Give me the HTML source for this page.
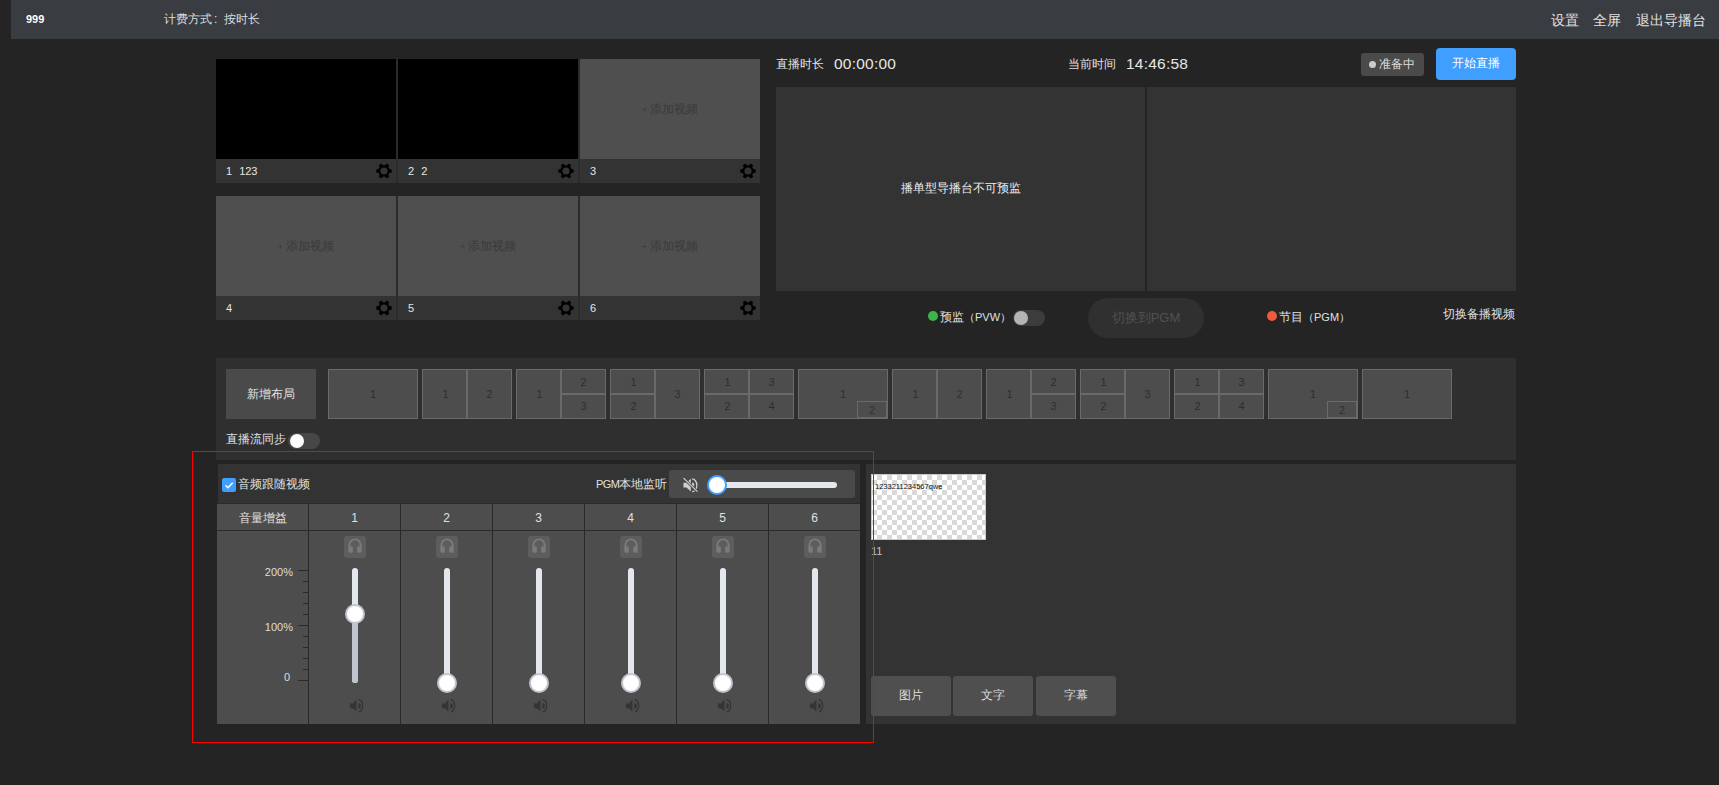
<!DOCTYPE html>
<html><head><meta charset="utf-8">
<style>
*{margin:0;padding:0;box-sizing:border-box}
html,body{width:1719px;height:785px;overflow:hidden;background:#242424;font-family:"Liberation Sans",sans-serif;color:#ddd}
.a{position:absolute}
.t{position:absolute;white-space:nowrap;line-height:1}
#top{left:11px;top:0;width:1708px;height:39px;background:#393c40}
.tile{position:absolute;width:180px;height:124px}
.tile .pv{position:absolute;left:0;top:0;width:180px;height:100px;background:#000}
.tile .pv.e{background:#4f4f4f}
.tile .ft{position:absolute;left:0;top:100px;width:180px;height:24px;background:#333}
.tile .lb{position:absolute;left:10px;top:7px;font-size:11px;line-height:11px;color:#e6e6e6}
.tile .add{position:absolute;left:0;top:43px;width:180px;text-align:center;font-size:12px;line-height:14px;color:#3a3a3a}
.gear{position:absolute;left:160px;top:4px;width:16px;height:16px}
.gap{position:absolute;width:2px;background:#2b2b2b}
.pane{position:absolute;top:87px;width:369px;height:204px;background:#333}
.lay{position:absolute;top:369px;width:90px;height:50px}
.c{position:absolute;border:1px solid #6a6a6a;background:#4d4d4d;color:#2e2e2e;font-size:11px;display:flex;align-items:center;justify-content:center}
.col{position:absolute;top:504px;width:91px;height:220px}
.hd{position:absolute;left:0;top:0;width:91px;height:26px;background:#4d4d4d;font-size:12px;line-height:28px;text-align:center;color:#e0e0e0}
.bd{position:absolute;left:0;top:27px;width:91px;height:193px;background:#4d4d4d}
.hp{position:absolute;left:35px;top:32px;width:22px;height:22px;border-radius:3px;background:#5d5d5d}
.trk{position:absolute;left:43px;top:64px;width:6px;height:115px;border-radius:3px;background:#e4e7ed}
.knob{position:absolute;left:36px;top:169px;width:20px;height:20px;border-radius:50%;background:#fff;border:2px solid #c0c4cc}
.spk{position:absolute;left:39.5px;top:195px;width:16px;height:14px}
.btn3{position:absolute;top:676px;width:80px;height:40px;border-radius:3px;background:#4f4f4f;font-size:12px;line-height:38px;text-align:center;color:#ddd}
</style></head><body>

<!-- top bar -->
<div class="a" id="top"></div>
<div class="t" style="left:26px;top:14px;font-size:11px;color:#fff;font-weight:bold">999</div>
<div class="t" style="left:164px;top:13px;font-size:12px;color:#ddd">计费方式<span style="display:inline-block;width:12px;padding-left:2px">:</span>按时长</div>
<div class="t" style="left:1551px;top:13px;font-size:14px;color:#e0e0e0">设置</div>
<div class="t" style="left:1593px;top:13px;font-size:14px;color:#e0e0e0">全屏</div>
<div class="t" style="left:1636px;top:13px;font-size:14px;color:#e0e0e0">退出导播台</div>


<div class="tile" style="left:216px;top:59px">
<div class="pv"></div>
<div class="ft"><div class="lb">1<span style="margin-left:7px">123</span></div><svg class="gear" viewBox="0 0 16 16"><g fill="#000"><circle cx="8" cy="8" r="5.8"/>
<rect y="6.3" x="0.3" height="3.4" width="15.4" rx="0.4"/>
<rect y="6.3" x="0.3" height="3.4" width="15.4" rx="0.4" transform="rotate(60 8 8)"/>
<rect y="6.3" x="0.3" height="3.4" width="15.4" rx="0.4" transform="rotate(120 8 8)"/></g>
<circle cx="8" cy="8" r="3.6" fill="#333"/></svg></div>
</div>
<div class="tile" style="left:398px;top:59px">
<div class="pv"></div>
<div class="ft"><div class="lb">2<span style="margin-left:7px">2</span></div><svg class="gear" viewBox="0 0 16 16"><g fill="#000"><circle cx="8" cy="8" r="5.8"/>
<rect y="6.3" x="0.3" height="3.4" width="15.4" rx="0.4"/>
<rect y="6.3" x="0.3" height="3.4" width="15.4" rx="0.4" transform="rotate(60 8 8)"/>
<rect y="6.3" x="0.3" height="3.4" width="15.4" rx="0.4" transform="rotate(120 8 8)"/></g>
<circle cx="8" cy="8" r="3.6" fill="#333"/></svg></div>
</div>
<div class="tile" style="left:580px;top:59px">
<div class="pv e"><div class="add"><span style="font-size:9px">+</span> 添加视频</div></div>
<div class="ft"><div class="lb">3</div><svg class="gear" viewBox="0 0 16 16"><g fill="#000"><circle cx="8" cy="8" r="5.8"/>
<rect y="6.3" x="0.3" height="3.4" width="15.4" rx="0.4"/>
<rect y="6.3" x="0.3" height="3.4" width="15.4" rx="0.4" transform="rotate(60 8 8)"/>
<rect y="6.3" x="0.3" height="3.4" width="15.4" rx="0.4" transform="rotate(120 8 8)"/></g>
<circle cx="8" cy="8" r="3.6" fill="#333"/></svg></div>
</div>
<div class="tile" style="left:216px;top:196px">
<div class="pv e"><div class="add"><span style="font-size:9px">+</span> 添加视频</div></div>
<div class="ft"><div class="lb">4</div><svg class="gear" viewBox="0 0 16 16"><g fill="#000"><circle cx="8" cy="8" r="5.8"/>
<rect y="6.3" x="0.3" height="3.4" width="15.4" rx="0.4"/>
<rect y="6.3" x="0.3" height="3.4" width="15.4" rx="0.4" transform="rotate(60 8 8)"/>
<rect y="6.3" x="0.3" height="3.4" width="15.4" rx="0.4" transform="rotate(120 8 8)"/></g>
<circle cx="8" cy="8" r="3.6" fill="#333"/></svg></div>
</div>
<div class="tile" style="left:398px;top:196px">
<div class="pv e"><div class="add"><span style="font-size:9px">+</span> 添加视频</div></div>
<div class="ft"><div class="lb">5</div><svg class="gear" viewBox="0 0 16 16"><g fill="#000"><circle cx="8" cy="8" r="5.8"/>
<rect y="6.3" x="0.3" height="3.4" width="15.4" rx="0.4"/>
<rect y="6.3" x="0.3" height="3.4" width="15.4" rx="0.4" transform="rotate(60 8 8)"/>
<rect y="6.3" x="0.3" height="3.4" width="15.4" rx="0.4" transform="rotate(120 8 8)"/></g>
<circle cx="8" cy="8" r="3.6" fill="#333"/></svg></div>
</div>
<div class="tile" style="left:580px;top:196px">
<div class="pv e"><div class="add"><span style="font-size:9px">+</span> 添加视频</div></div>
<div class="ft"><div class="lb">6</div><svg class="gear" viewBox="0 0 16 16"><g fill="#000"><circle cx="8" cy="8" r="5.8"/>
<rect y="6.3" x="0.3" height="3.4" width="15.4" rx="0.4"/>
<rect y="6.3" x="0.3" height="3.4" width="15.4" rx="0.4" transform="rotate(60 8 8)"/>
<rect y="6.3" x="0.3" height="3.4" width="15.4" rx="0.4" transform="rotate(120 8 8)"/></g>
<circle cx="8" cy="8" r="3.6" fill="#333"/></svg></div>
</div>
<div class="gap" style="left:396px;top:59px;height:124px"></div>
<div class="gap" style="left:578px;top:59px;height:124px"></div>
<div class="gap" style="left:396px;top:196px;height:124px"></div>
<div class="gap" style="left:578px;top:196px;height:124px"></div>
<div class="t" style="left:776px;top:58px;font-size:12px;color:#e0e0e0">直播时长</div>
<div class="t" style="left:834px;top:56px;font-size:15.5px;letter-spacing:0.22px;color:#e6e6e6">00:00:00</div>
<div class="t" style="left:1068px;top:58px;font-size:12px;color:#e0e0e0">当前时间</div>
<div class="t" style="left:1126px;top:56px;font-size:15.5px;letter-spacing:0.22px;color:#e6e6e6">14:46:58</div>
<div class="a" style="left:1361px;top:53px;width:63px;height:23px;background:#4a4a4a;border-radius:3px"></div>
<div class="a" style="left:1369px;top:61px;width:7px;height:7px;background:#ccc;border-radius:50%"></div>
<div class="t" style="left:1379px;top:58px;font-size:12px;color:#ddd">准备中</div>
<div class="a" style="left:1436px;top:48px;width:80px;height:32px;background:#409eff;border-radius:4px;font-size:12px;line-height:30px;text-align:center;color:#fff">开始直播</div>
<div class="pane" style="left:776px"><div class="t" style="left:0;width:369px;top:95px;text-align:center;font-size:12px;color:#eee">播单型导播台不可预监</div></div>
<div class="pane" style="left:1147px"></div>
<div class="a" style="left:928px;top:311px;width:10px;height:10px;border-radius:50%;background:#3cb64b"></div>
<div class="t" style="left:940px;top:311px;font-size:12px;color:#e0e0e0">预监<span style="font-size:11px">（PVW）</span></div>
<div class="a" style="left:1013px;top:310px;width:32px;height:16px;border-radius:8px;background:#3c3c3c"></div>
<div class="a" style="left:1014px;top:311px;width:14px;height:14px;border-radius:50%;background:#b4b4b4"></div>
<div class="a" style="left:1088px;top:298px;width:116px;height:40px;border-radius:20px;background:#303030;font-size:13px;line-height:40px;text-align:center;color:#505050">切换到PGM</div>
<div class="a" style="left:1267px;top:311px;width:10px;height:10px;border-radius:50%;background:#f05a3c"></div>
<div class="t" style="left:1279px;top:311px;font-size:12px;color:#e0e0e0">节目<span style="font-size:11px">（PGM）</span></div>
<div class="t" style="left:1443px;top:308px;font-size:12px;color:#e0e0e0">切换备播视频</div>
<div class="a" style="left:216px;top:358px;width:1300px;height:102px;background:#2f2f2f"></div>
<div class="a" style="left:226px;top:369px;width:90px;height:50px;background:#4a4a4a;font-size:12px;line-height:50px;text-align:center;color:#e0e0e0">新增布局</div>
<div class="lay" style="left:328px"><div class="c" style="left:0px;top:0px;width:90px;height:50px;">1</div></div>
<div class="lay" style="left:422px"><div class="c" style="left:0px;top:0px;width:45px;height:50px;padding-left:2px;">1</div><div class="c" style="left:45px;top:0px;width:45px;height:50px;">2</div></div>
<div class="lay" style="left:516px"><div class="c" style="left:0px;top:0px;width:45px;height:50px;padding-left:2px;">1</div><div class="c" style="left:45px;top:0px;width:45px;height:25px;">2</div><div class="c" style="left:45px;top:25px;width:45px;height:25px;padding-bottom:2px;">3</div></div>
<div class="lay" style="left:610px"><div class="c" style="left:0px;top:0px;width:45px;height:25px;padding-left:2px;">1</div><div class="c" style="left:0px;top:25px;width:45px;height:25px;padding-left:2px;padding-bottom:2px;">2</div><div class="c" style="left:45px;top:0px;width:45px;height:50px;">3</div></div>
<div class="lay" style="left:704px"><div class="c" style="left:0px;top:0px;width:45px;height:25px;padding-left:2px;">1</div><div class="c" style="left:0px;top:25px;width:45px;height:25px;padding-left:2px;padding-bottom:2px;">2</div><div class="c" style="left:45px;top:0px;width:45px;height:25px;">3</div><div class="c" style="left:45px;top:25px;width:45px;height:25px;padding-bottom:2px;">4</div></div>
<div class="lay" style="left:798px"><div class="c" style="left:0px;top:0px;width:90px;height:50px;">1</div><div class="c" style="left:59px;top:32px;width:30px;height:17px;">2</div></div>
<div class="lay" style="left:892px"><div class="c" style="left:0px;top:0px;width:45px;height:50px;padding-left:2px;">1</div><div class="c" style="left:45px;top:0px;width:45px;height:50px;">2</div></div>
<div class="lay" style="left:986px"><div class="c" style="left:0px;top:0px;width:45px;height:50px;padding-left:2px;">1</div><div class="c" style="left:45px;top:0px;width:45px;height:25px;">2</div><div class="c" style="left:45px;top:25px;width:45px;height:25px;padding-bottom:2px;">3</div></div>
<div class="lay" style="left:1080px"><div class="c" style="left:0px;top:0px;width:45px;height:25px;padding-left:2px;">1</div><div class="c" style="left:0px;top:25px;width:45px;height:25px;padding-left:2px;padding-bottom:2px;">2</div><div class="c" style="left:45px;top:0px;width:45px;height:50px;">3</div></div>
<div class="lay" style="left:1174px"><div class="c" style="left:0px;top:0px;width:45px;height:25px;padding-left:2px;">1</div><div class="c" style="left:0px;top:25px;width:45px;height:25px;padding-left:2px;padding-bottom:2px;">2</div><div class="c" style="left:45px;top:0px;width:45px;height:25px;">3</div><div class="c" style="left:45px;top:25px;width:45px;height:25px;padding-bottom:2px;">4</div></div>
<div class="lay" style="left:1268px"><div class="c" style="left:0px;top:0px;width:90px;height:50px;">1</div><div class="c" style="left:59px;top:32px;width:30px;height:17px;">2</div></div>
<div class="lay" style="left:1362px"><div class="c" style="left:0px;top:0px;width:90px;height:50px;">1</div></div>
<div class="t" style="left:226px;top:433px;font-size:12px;color:#e0e0e0">直播流同步</div>
<div class="a" style="left:288px;top:433px;width:32px;height:16px;border-radius:8px;background:#474747"></div>
<div class="a" style="left:290px;top:434px;width:14px;height:14px;border-radius:50%;background:#fff"></div>
<div class="a" style="left:218px;top:464px;width:642px;height:260px;background:#333"></div>
<div class="a" style="left:222px;top:478px;width:14px;height:14px;border-radius:2px;background:#409eff"><svg width="14" height="14" style="position:absolute;left:0;top:0"><path d="M3.5 7.2 L6 9.7 L10.7 4.8" fill="none" stroke="#fff" stroke-width="1.5"/></svg></div>
<div class="t" style="left:238px;top:478px;font-size:12px;color:#e0e0e0">音频跟随视频</div>
<div class="t" style="left:596px;top:478px;font-size:12px;color:#e0e0e0"><span style="font-size:11px;letter-spacing:-0.6px">PGM</span>本地监听</div>
<div class="a" style="left:669px;top:470px;width:186px;height:28px;border-radius:3px;background:#4a4a4a"><svg width="16" height="16" viewBox="0 0 17 17" style="position:absolute;left:13.7px;top:6.6px"><path d="M0.5 6 H3.7 L8.3 1.8 V15.4 L3.7 11.2 H0.5 Z" fill="#cfcfcf"/>
<path d="M9.7 2 A5 6.8 0 0 1 9.7 15.6" fill="none" stroke="#cfcfcf" stroke-width="1.4"/><path d="M9.6 5.8 A2.4 2.8 0 0 1 9.6 11.4 Z" fill="#cfcfcf"/>
<path d="M0.6 1.2 L15.4 15.6" stroke="#4a4a4a" stroke-width="2.8"/><path d="M0.6 1.2 L15.4 15.6" stroke="#cfcfcf" stroke-width="1.3"/></svg><div class="a" style="left:48px;top:12px;width:120px;height:6px;border-radius:3px;background:#e4e7ed"></div><div class="a" style="left:38px;top:5px;width:20px;height:20px;border-radius:50%;background:#fff;border:2px solid #409eff"></div></div>
<div class="a" style="left:217px;top:503px;width:643px;height:221px;background:#2a2a2a"></div>
<div class="col" style="left:217px"><div class="hd">音量增益</div><div class="bd"></div></div>
<div class="t" style="left:253px;width:40px;text-align:right;top:567px;font-size:11px;color:#ddd">200%</div>
<div class="t" style="left:253px;width:40px;text-align:right;top:622px;font-size:11px;color:#ddd">100%</div>
<div class="t" style="left:250px;width:40px;text-align:right;top:672px;font-size:11px;color:#ddd">0</div>
<div class="a" style="left:298px;top:570px;width:10px;height:1px;background:#2a2a2a"></div>
<div class="a" style="left:303px;top:581px;width:5px;height:1px;background:#2a2a2a"></div>
<div class="a" style="left:303px;top:592px;width:5px;height:1px;background:#2a2a2a"></div>
<div class="a" style="left:303px;top:603px;width:5px;height:1px;background:#2a2a2a"></div>
<div class="a" style="left:303px;top:614px;width:5px;height:1px;background:#2a2a2a"></div>
<div class="a" style="left:298px;top:625px;width:10px;height:1px;background:#2a2a2a"></div>
<div class="a" style="left:303px;top:636px;width:5px;height:1px;background:#2a2a2a"></div>
<div class="a" style="left:303px;top:647px;width:5px;height:1px;background:#2a2a2a"></div>
<div class="a" style="left:303px;top:658px;width:5px;height:1px;background:#2a2a2a"></div>
<div class="a" style="left:303px;top:669px;width:5px;height:1px;background:#2a2a2a"></div>
<div class="a" style="left:298px;top:680px;width:10px;height:1px;background:#2a2a2a"></div>
<div class="col" style="left:309px"><div class="hd">1</div><div class="bd"></div><div class="hp"><svg width="14" height="15" viewBox="0 0 14 15" style="position:absolute;left:4px;top:1.6px"><path d="M1.4 9.5 V7 A5.6 5.6 0 0 1 12.6 7 V9.5" fill="none" stroke="#7a7a7a" stroke-width="1.9"/>
<rect x="0.3" y="8.3" width="4.5" height="6.4" rx="1.4" fill="#7a7a7a"/><rect x="9.2" y="8.3" width="4.5" height="6.4" rx="1.4" fill="#7a7a7a"/></svg></div><div class="trk"><div class="a" style="left:0;top:46px;width:6px;height:69px;border-radius:0 0 3px 3px;background:#c0c4cc"></div></div><div class="knob" style="top:100px"></div><svg width="16" height="14" viewBox="0 0 16 14" class="spk"><path d="M0.9 4.6 H4 L7.4 0.6 V12.6 L4 9.2 H0.9 Z" fill="#343434"/>
<path d="M9.3 4.3 A2.6 2.7 0 0 1 9.3 9.7 Z" fill="#343434"/><path d="M9.6 0.7 A4.1 6.1 0 0 1 9.6 12.9" fill="none" stroke="#343434" stroke-width="1.3"/></svg></div>
<div class="col" style="left:401px"><div class="hd">2</div><div class="bd"></div><div class="hp"><svg width="14" height="15" viewBox="0 0 14 15" style="position:absolute;left:4px;top:1.6px"><path d="M1.4 9.5 V7 A5.6 5.6 0 0 1 12.6 7 V9.5" fill="none" stroke="#7a7a7a" stroke-width="1.9"/>
<rect x="0.3" y="8.3" width="4.5" height="6.4" rx="1.4" fill="#7a7a7a"/><rect x="9.2" y="8.3" width="4.5" height="6.4" rx="1.4" fill="#7a7a7a"/></svg></div><div class="trk"></div><div class="knob" style="top:169px"></div><svg width="16" height="14" viewBox="0 0 16 14" class="spk"><path d="M0.9 4.6 H4 L7.4 0.6 V12.6 L4 9.2 H0.9 Z" fill="#343434"/>
<path d="M9.3 4.3 A2.6 2.7 0 0 1 9.3 9.7 Z" fill="#343434"/><path d="M9.6 0.7 A4.1 6.1 0 0 1 9.6 12.9" fill="none" stroke="#343434" stroke-width="1.3"/></svg></div>
<div class="col" style="left:493px"><div class="hd">3</div><div class="bd"></div><div class="hp"><svg width="14" height="15" viewBox="0 0 14 15" style="position:absolute;left:4px;top:1.6px"><path d="M1.4 9.5 V7 A5.6 5.6 0 0 1 12.6 7 V9.5" fill="none" stroke="#7a7a7a" stroke-width="1.9"/>
<rect x="0.3" y="8.3" width="4.5" height="6.4" rx="1.4" fill="#7a7a7a"/><rect x="9.2" y="8.3" width="4.5" height="6.4" rx="1.4" fill="#7a7a7a"/></svg></div><div class="trk"></div><div class="knob" style="top:169px"></div><svg width="16" height="14" viewBox="0 0 16 14" class="spk"><path d="M0.9 4.6 H4 L7.4 0.6 V12.6 L4 9.2 H0.9 Z" fill="#343434"/>
<path d="M9.3 4.3 A2.6 2.7 0 0 1 9.3 9.7 Z" fill="#343434"/><path d="M9.6 0.7 A4.1 6.1 0 0 1 9.6 12.9" fill="none" stroke="#343434" stroke-width="1.3"/></svg></div>
<div class="col" style="left:585px"><div class="hd">4</div><div class="bd"></div><div class="hp"><svg width="14" height="15" viewBox="0 0 14 15" style="position:absolute;left:4px;top:1.6px"><path d="M1.4 9.5 V7 A5.6 5.6 0 0 1 12.6 7 V9.5" fill="none" stroke="#7a7a7a" stroke-width="1.9"/>
<rect x="0.3" y="8.3" width="4.5" height="6.4" rx="1.4" fill="#7a7a7a"/><rect x="9.2" y="8.3" width="4.5" height="6.4" rx="1.4" fill="#7a7a7a"/></svg></div><div class="trk"></div><div class="knob" style="top:169px"></div><svg width="16" height="14" viewBox="0 0 16 14" class="spk"><path d="M0.9 4.6 H4 L7.4 0.6 V12.6 L4 9.2 H0.9 Z" fill="#343434"/>
<path d="M9.3 4.3 A2.6 2.7 0 0 1 9.3 9.7 Z" fill="#343434"/><path d="M9.6 0.7 A4.1 6.1 0 0 1 9.6 12.9" fill="none" stroke="#343434" stroke-width="1.3"/></svg></div>
<div class="col" style="left:677px"><div class="hd">5</div><div class="bd"></div><div class="hp"><svg width="14" height="15" viewBox="0 0 14 15" style="position:absolute;left:4px;top:1.6px"><path d="M1.4 9.5 V7 A5.6 5.6 0 0 1 12.6 7 V9.5" fill="none" stroke="#7a7a7a" stroke-width="1.9"/>
<rect x="0.3" y="8.3" width="4.5" height="6.4" rx="1.4" fill="#7a7a7a"/><rect x="9.2" y="8.3" width="4.5" height="6.4" rx="1.4" fill="#7a7a7a"/></svg></div><div class="trk"></div><div class="knob" style="top:169px"></div><svg width="16" height="14" viewBox="0 0 16 14" class="spk"><path d="M0.9 4.6 H4 L7.4 0.6 V12.6 L4 9.2 H0.9 Z" fill="#343434"/>
<path d="M9.3 4.3 A2.6 2.7 0 0 1 9.3 9.7 Z" fill="#343434"/><path d="M9.6 0.7 A4.1 6.1 0 0 1 9.6 12.9" fill="none" stroke="#343434" stroke-width="1.3"/></svg></div>
<div class="col" style="left:769px"><div class="hd">6</div><div class="bd"></div><div class="hp"><svg width="14" height="15" viewBox="0 0 14 15" style="position:absolute;left:4px;top:1.6px"><path d="M1.4 9.5 V7 A5.6 5.6 0 0 1 12.6 7 V9.5" fill="none" stroke="#7a7a7a" stroke-width="1.9"/>
<rect x="0.3" y="8.3" width="4.5" height="6.4" rx="1.4" fill="#7a7a7a"/><rect x="9.2" y="8.3" width="4.5" height="6.4" rx="1.4" fill="#7a7a7a"/></svg></div><div class="trk"></div><div class="knob" style="top:169px"></div><svg width="16" height="14" viewBox="0 0 16 14" class="spk"><path d="M0.9 4.6 H4 L7.4 0.6 V12.6 L4 9.2 H0.9 Z" fill="#343434"/>
<path d="M9.3 4.3 A2.6 2.7 0 0 1 9.3 9.7 Z" fill="#343434"/><path d="M9.6 0.7 A4.1 6.1 0 0 1 9.6 12.9" fill="none" stroke="#343434" stroke-width="1.3"/></svg></div>
<div class="a" style="left:866px;top:464px;width:650px;height:260px;background:#333"></div>
<div class="a" style="left:871px;top:474px;width:115px;height:66px;border:1px solid #c8c8c8;background-color:#fff;background-image:linear-gradient(45deg,#d9d9d9 25%,transparent 25%,transparent 75%,#d9d9d9 75%),linear-gradient(45deg,#d9d9d9 25%,transparent 25%,transparent 75%,#d9d9d9 75%);background-size:10px 10px;background-position:0 0,5px 5px"><div class="t" style="left:3px;top:8px;font-size:7.5px;color:#111">1233211234567qwe</div></div>
<div class="t" style="left:871px;top:546px;font-size:11px;color:#c0c0c0">11</div>
<div class="btn3" style="left:871px">图片</div>
<div class="btn3" style="left:953px">文字</div>
<div class="btn3" style="left:1036px">字幕</div>
<div class="a" style="left:192px;top:451px;width:682px;height:292px;border:1px solid #ff0000"></div>
</body></html>
